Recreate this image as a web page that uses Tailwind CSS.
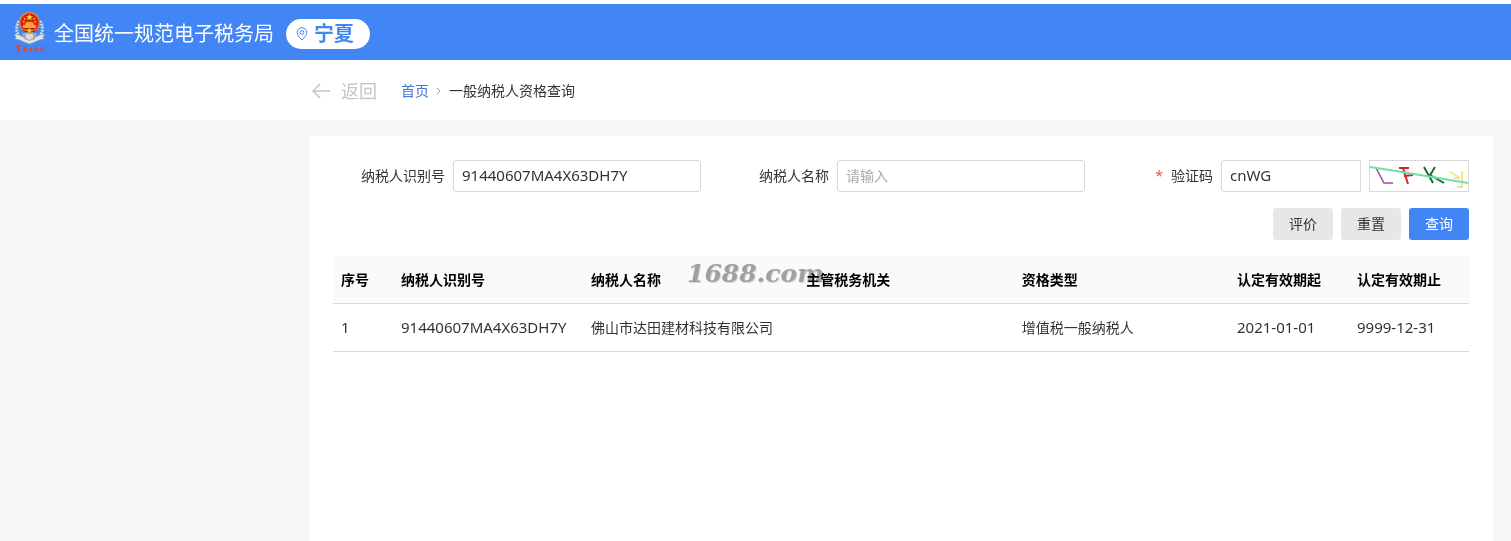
<!DOCTYPE html>
<html lang="zh-CN">

<head>
  <meta charset="UTF-8">
  <meta name="viewport" content="width=device-width, initial-scale=1.0">
  <title>一般纳税人资格查询</title>
  <script src="https://cdn.jsdelivr.net/npm/@tailwindcss/browser@4"></script>
</head>

<body class="flex min-h-screen flex-col bg-[#f6f7f9] font-['Noto_Sans','Noto_Sans_CJK_SC',sans-serif] text-sm text-[#333333]">
  <header class="flex h-[60px] items-center border-t-4 border-white bg-[#4285f4] pt-1 pl-3">
    <!-- emblem -->
    <svg class="mr-[7px] -mt-1 h-11 w-[35px]" viewBox="0 0 35 44" aria-hidden="true">
      <path d="M7 11C3 17 4 25 11 30M28 11C32 17 31 25 24 30" fill="none" stroke="#d3dbe2" stroke-width="3" stroke-dasharray="2 1" />
      <path d="M2 24c5 0 9 3 15.500 6C24 27 28 24 33 24l-2 3 1 2c-4 0-8 3-14.500 5C11 32 7 29 3 29l1-2z" fill="#e1e3e5" stroke="#8795a8" stroke-width=".6" />
      <path d="M10 23h15l-2 6-5.500 2-5.500-2z" fill="#a9abae" />
      <path d="M14 24h7v4l-3.500 2-3.500-2z" fill="#d9dcdf" />
      <circle cx="17.500" cy="12.500" r="10" fill="#dc2415" stroke="#c98a55" stroke-width="1.500" />
      <path d="M17.500 4l1 2.300h2.400l-2 1.500.8 2.400-2.200-1.400-2.200 1.400.8-2.400-2-1.500h2.400z" fill="#ffd838" />
      <path d="M12 8h1.500v1.500H12zM21.500 8H23v1.500h-1.500zM11 11h1.500v1.500H11zM22.500 11H24v1.500h-1.500z" fill="#ffc72e" />
      <path d="M13 14l2-2h5l2 2v1h2v3H11v-3h2z" fill="#f9a82c" />
      <path d="M9 18h17l-3 4H12z" fill="#c91c12" />
      <path d="M10 19c3 2 12 2 15 0" fill="none" stroke="#f3a52d" />
      <circle cx="17.500" cy="20.500" r="2" fill="#f3b52d" />
      <path d="M4 36h5M5 38h3M6.500 36v5l-2 1M11 38h4M12 40h3M13 37v5M17 40l3-2M18 42l1-3M22 39l2-1-1 4M25 40h2M28 38h4M29 40l3-1M30 37v5" fill="none" stroke="#e4462f" stroke-width="1.400" />
    </svg>
    <h1 class="text-xl text-white">全国统一规范电子税务局</h1>
    <button type="button" class="ml-3 flex h-[30px] items-center gap-[6px] rounded-full bg-white pr-4 pl-[10px] text-xl font-bold text-[#4285f4]">
      <svg class="h-[14px] w-3" viewBox="0 0 12 14" fill="none" stroke="currentColor" aria-hidden="true">
        <path d="M6 13C3 10 1.200 8 1.200 5.500a4.800 4.800 0 0 1 9.600 0C10.800 8 9 10 6 13z" />
        <circle cx="6" cy="5.500" r="1.800" />
      </svg>
      宁夏
    </button>
  </header>

  <nav class="flex h-[60px] items-center bg-white pt-px pl-[312px]" aria-label="面包屑">
    <a href="#" class="flex items-center gap-[11px] text-lg text-[#c4c4c4]">
      <svg class="h-4 w-[18px]" viewBox="0 0 18 16" fill="none" stroke="currentColor" stroke-width="1.500" aria-hidden="true">
        <path d="M18 8H1M8 1L1 8l7 7" />
      </svg>
      返回
    </a>
    <a href="#" class="ml-6 text-[#4276d6]">首页</a>
    <svg class="mx-[7px] h-2 w-[6px]" viewBox="0 0 6 8" fill="none" stroke="#999999" aria-hidden="true">
      <path d="M1 1l3 3-3 3" />
    </svg>
    <span>一般纳税人资格查询</span>
  </nav>

  <main class="mt-4 mr-[18px] ml-[309px] flex-1 bg-white p-6">
    <form>
      <div class="grid grid-cols-3 gap-4">
        <div class="flex items-center gap-2">
          <label for="taxId" class="w-28 shrink-0 text-right">纳税人识别号</label>
          <input id="taxId" type="text" value="91440607MA4X63DH7Y" class="h-8 w-full min-w-0 rounded-[3px] border border-[#d9d9dc] px-2 pb-[2px] text-[15px]">
        </div>
        <div class="flex items-center gap-2">
          <label for="taxName" class="w-28 shrink-0 text-right">纳税人名称</label>
          <input id="taxName" type="text" placeholder="请输入" class="h-8 w-full min-w-0 rounded-[3px] border border-[#d9d9dc] px-2 pb-[2px] placeholder:text-[#aaaaaa]">
        </div>
        <div class="flex items-center gap-2">
          <label for="captcha" class="w-28 shrink-0 text-right"><span class="mr-2 text-[#e05a5a]">*</span>验证码</label>
          <input id="captcha" type="text" value="cnWG" class="h-8 w-full min-w-0 rounded-l-[3px] border border-[#d9d9dc] px-2 pb-[2px] text-[15px]">
          <button type="button" class="h-8 w-[100px] shrink-0 border border-[#d9d9dc]" aria-label="刷新验证码">
            <svg class="h-[30px] w-[98px]" viewBox="0 0 98 30" fill="none" stroke-width="1.500" aria-hidden="true">
              <path d="M6 7l8 15h9" stroke="#a04a9c" />
              <path d="M29 7h10M33 7l5 16M34 15l9-1" stroke="#d0262c" stroke-width="2" />
              <path d="M54 6l9 16M65 6l-6 10M60 14l14 8" stroke="#1d6b2e" stroke-width="2" />
              <path d="M80 11l10 6M92 10v16h-5M90 17h-6" stroke="#f8e28c" stroke-width="2" />
              <path d="M0 6l32 5 66 11" stroke="#6fe0a8" stroke-width="2" />
            </svg>
          </button>
        </div>
      </div>
      <div class="mt-4 flex justify-end gap-2">
        <button type="button" class="h-8 w-15 rounded-[3px] bg-[#e7e7e7]">评价</button>
        <button type="reset" class="h-8 w-15 rounded-[3px] bg-[#e7e7e7]">重置</button>
        <button type="submit" class="h-8 w-15 rounded-[3px] bg-[#4285f4] text-white">查询</button>
      </div>
    </form>

    <div class="relative mt-4">
      <table class="w-full table-fixed border-separate border-spacing-0 text-left">
        <colgroup>
          <col class="w-[60px]">
          <col class="w-[190px]">
          <col>
          <col>
          <col>
          <col class="w-[120px]">
          <col class="w-[120px]">
        </colgroup>
        <thead class="bg-[#f9fafc] text-black">
          <tr>
            <th class="h-12 border-b border-[#d9dade] px-2">序号</th>
            <th class="h-12 border-b border-[#d9dade] px-2">纳税人识别号</th>
            <th class="h-12 border-b border-[#d9dade] px-2">纳税人名称</th>
            <th class="h-12 border-b border-[#d9dade] px-2">主管税务机关</th>
            <th class="h-12 border-b border-[#d9dade] px-2">资格类型</th>
            <th class="h-12 border-b border-[#d9dade] px-2">认定有效期起</th>
            <th class="h-12 border-b border-[#d9dade] px-2">认定有效期止</th>
          </tr>
        </thead>
        <tbody>
          <tr>
            <td class="h-12 border-b border-[#d9dade] px-2 text-[15px]">1</td>
            <td class="h-12 border-b border-[#d9dade] px-2 text-[15px]">91440607MA4X63DH7Y</td>
            <td class="h-12 border-b border-[#d9dade] px-2">佛山市达田建材科技有限公司</td>
            <td class="h-12 border-b border-[#d9dade] px-2"></td>
            <td class="h-12 border-b border-[#d9dade] px-2">增值税一般纳税人</td>
            <td class="h-12 border-b border-[#d9dade] px-2 text-[15px]">2021-01-01</td>
            <td class="h-12 border-b border-[#d9dade] px-2 text-[15px]">9999-12-31</td>
          </tr>
        </tbody>
      </table>
      <!-- watermark -->
      <span class="pointer-events-none absolute top-0 left-[354px] font-['DejaVu_Serif',serif] text-[25px] font-bold text-[#a3a3a3] italic mix-blend-multiply text-shadow-[1px_1px_0_#dddddd]">1688.com</span>
    </div>
  </main>
</body>

</html>
